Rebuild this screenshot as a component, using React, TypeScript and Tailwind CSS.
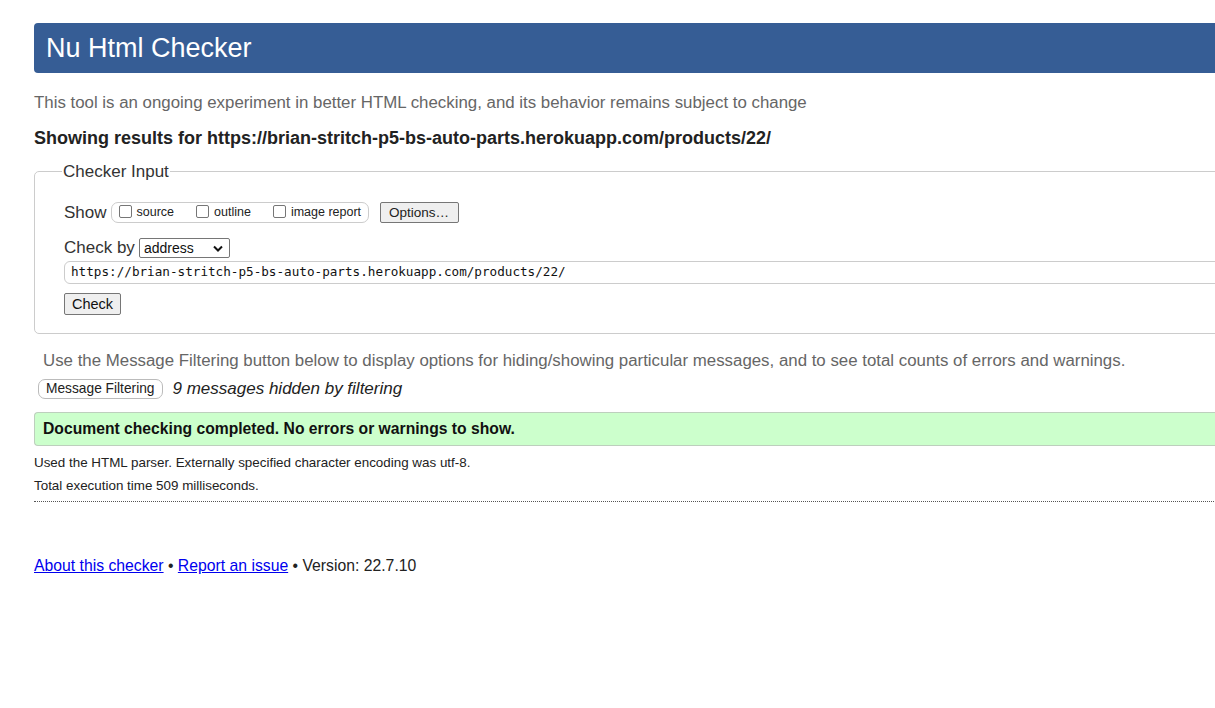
import React from "react";

function Box({ label }: { label: string }) {
  return (
    <label className="flex items-center">
      <span className="inline-block w-[13px] h-[13px] border border-[#767676] rounded-[2px] bg-white mr-[5px] mb-[3px]" />
      <span className="text-[12.5px] text-[#222]">{label}</span>
    </label>
  );
}

export default function App() {
  return (
    <div className="w-[1215px] h-[708px] overflow-hidden bg-white" style={{ fontFamily: '"Liberation Sans", Arial, sans-serif' }}>
      <div className="w-[1400px] pl-[34px] pt-[23px] text-[#222]">
        <h1 className="h-[50px] bg-[#365d95] rounded-l-[4px] text-white text-[27px] leading-[50px] pl-[12px]">
          Nu Html Checker
        </h1>
        <p className="text-[16.85px] text-[#666] mt-[18px] leading-[24px]">
          This tool is an ongoing experiment in better HTML checking, and its behavior remains subject to change
        </p>
        <p className="text-[18px] font-bold mt-[11px] leading-[24px] text-[#222]">
          Showing results for https://brian-stritch-p5-bs-auto-parts.herokuapp.com/products/22/
        </p>
        <fieldset className="border border-[#ccc] rounded-l-[5px] mt-[9px] pl-[29px] h-[175px]">
          <legend className="text-[17px] text-[#333] px-[1px] ml-[-2px]">Checker Input</legend>
          <div className="flex items-center mt-[17px] h-[22px]">
            <span className="text-[17px] text-[#333] mr-[4px]">Show</span>
            <div className="flex items-center h-[21px] w-[258px] border border-[#ccc] rounded-[7px] pl-[7px] gap-[22px]">
              <Box label="source" />
              <Box label="outline" />
              <Box label="image report" />
            </div>
            <button className="ml-[11px] h-[21px] w-[79px] border border-[#767676] bg-[#efefef] rounded-[2px] text-[13.5px] text-[#222] leading-[19px]">
              Options…
            </button>
          </div>
          <div className="flex items-center mt-[14px] h-[21px]">
            <span className="text-[17px] text-[#333] mr-[4px]">Check by</span>
            <div className="flex items-center justify-between h-[20px] w-[91px] border border-[#767676] rounded-[2px] pl-[4px] pr-[6px]">
              <span className="text-[14px] text-[#111]">address</span>
              <svg width="10" height="7" viewBox="0 0 10 7">
                <path d="M1 1.5 L5 5.5 L9 1.5" stroke="#111" strokeWidth="2" fill="none" />
              </svg>
            </div>
          </div>
          <div className="mt-[2px] h-[23px] border border-[#ccc] rounded-[6px] pl-[6px] flex items-center">
            <span className="text-[#111]" style={{ fontFamily: '"DejaVu Sans Mono", "Liberation Mono", monospace', fontSize: "12.65px" }}>
              https://brian-stritch-p5-bs-auto-parts.herokuapp.com/products/22/
            </span>
          </div>
          <button className="mt-[9px] h-[22px] w-[57px] border border-[#767676] bg-[#efefef] rounded-[2px] text-[14.5px] text-[#111] leading-[20px]">
            Check
          </button>
        </fieldset>
        <p className="text-[16.85px] text-[#666] pl-[9px] mt-[15px] leading-[24px]">
          Use the Message Filtering button below to display options for hiding/showing particular messages, and to see total counts of errors and warnings.
        </p>
        <div className="flex items-center mt-[5px] pl-[4px] h-[21px]">
          <button className="h-[20px] px-[7px] border border-[#bbb] bg-white rounded-[7px] text-[13.75px] text-[#222] leading-[18px]">
            Message Filtering
          </button>
          <span className="italic text-[17px] text-[#222] ml-[10px]">9 messages hidden by filtering</span>
        </div>
        <div className="mt-[13px] h-[34px] bg-[#ccffcc] border-y border-l border-[#bdcfbd] rounded-l-[4px] flex items-center pl-[8px]">
          <span className="font-bold text-[15.7px] text-[#111]">Document checking completed. No errors or warnings to show.</span>
        </div>
        <p className="text-[13.4px] text-[#222] mt-[8px] leading-[17px]">
          Used the HTML parser. Externally specified character encoding was utf-8.
        </p>
        <p className="text-[13.4px] text-[#222] mt-[6px] leading-[17px]">Total execution time 509 milliseconds.</p>
        <div className="mt-[7px] border-b border-dotted border-[#555]" />
        <p className="text-[15.75px] text-[#222] mt-[52px] leading-[24px]">
          <a className="text-[#0000ee] underline" href="#">About this checker</a>
          {" • "}
          <a className="text-[#0000ee] underline" href="#">Report an issue</a>
          {" • Version: 22.7.10"}
        </p>
      </div>
    </div>
  );
}
